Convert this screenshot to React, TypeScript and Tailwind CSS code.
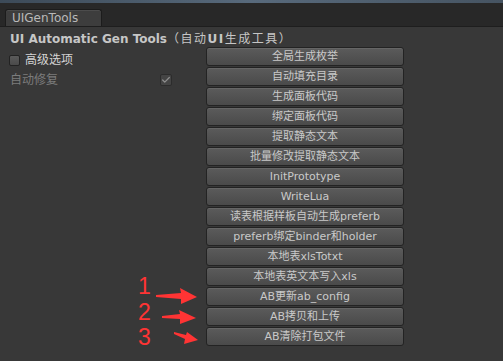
import { Check } from "lucide-react";

const buttons = [
  "全局生成枚举",
  "自动填充目录",
  "生成面板代码",
  "绑定面板代码",
  "提取静态文本",
  "批量修改提取静态文本",
  "InitPrototype",
  "WriteLua",
  "读表根据样板自动生成preferb",
  "preferb绑定binder和holder",
  "本地表xlsTotxt",
  "本地表英文本写入xls",
  "AB更新ab_config",
  "AB拷贝和上传",
  "AB清除打包文件",
];

const font = { fontFamily: '"DejaVu Sans", "Noto Sans CJK SC", sans-serif' };

function EditorButton({ label }: { label: string }) {
  return (
    <button
      className="h-[19px] w-[198px] rounded-[3px] border border-[#232323] bg-gradient-to-b from-[#5b5b5b] to-[#4a4a4a] text-[11px] leading-[17px] text-[#c9c9c9] shadow-[inset_0_1px_0_#666]"
    >
      {label}
    </button>
  );
}

// red markers drawn on top of the screenshot
function Annotations() {
  return (
    <div className="pointer-events-none absolute inset-0">
      <span className="absolute left-[138px] top-[273px] text-[23px] leading-[26px] text-[#ff3434]" style={{ fontFamily: '"Liberation Sans", sans-serif' }}>1</span>
      <span className="absolute left-[138px] top-[299px] text-[23px] leading-[26px] text-[#ff3434]" style={{ fontFamily: '"Liberation Sans", sans-serif' }}>2</span>
      <span className="absolute left-[138px] top-[324px] text-[23px] leading-[26px] text-[#ff3434]" style={{ fontFamily: '"Liberation Sans", sans-serif' }}>3</span>
      <svg className="absolute left-0 top-0" width="503" height="361">
        <polygon points="156,295 181,293 180,288 197,297 181,304 181,299 156,297" fill="#ff3434" />
        <polygon points="162,316 180,314 179,310 196,318 180,324 180,319 162,318" fill="#ff3434" />
        <polygon points="174,332 186,335 187,332 198,340 184,344 185,339 174,334" fill="#ff3434" />
      </svg>
    </div>
  );
}

export default function App() {
  return (
    <div className="relative flex h-[361px] w-[503px] flex-col overflow-hidden bg-[#383838]" style={font}>
      <div className="h-[3px] bg-gradient-to-r from-[#3c4a58] via-[#586a7c] to-[#465462]" />
      <div className="flex h-[24px] items-end border-b border-[#1e1e1e] bg-[#282828] pl-[5px]">
        <div className="flex h-[17px] w-[97px] items-center rounded-t-[3px] border border-b-0 border-[#1c1c1c] bg-[#3d3d3d] pl-[6px] text-[12px] text-[#b9b9b9] shadow-[inset_0_1px_0_#4c4c4c]">
          UIGenTools
        </div>
      </div>

      <div className="flex flex-col pl-[10px] pt-[5px]">
        <div className="h-[15px] text-[12px] leading-[15px] text-[#c6c6c6]">
          <span className="font-bold">UI Automatic Gen Tools</span>
          <span className="tracking-[1.5px]">（自动<span className="font-bold">UI</span>生成工具）</span>
        </div>
        <div className="flex">
          <div className="flex w-[196px] flex-col pt-[7px]">
            <div className="flex h-[12px] items-center gap-[5px]">
              <div className="ml-[-1px] h-[11px] w-[11px] rounded-[2px] border border-[#222] bg-gradient-to-b from-[#5a5a5a] to-[#4a4a4a]" />
              <span className="text-[12px] text-[#d4d4d4]">高级选项</span>
            </div>
            <div className="mt-[7px] flex h-[13px] items-center">
              <span className="w-[150px] text-[12px] text-[#7c7c7c]">自动修复</span>
              <div className="flex h-[12px] w-[12px] items-center justify-center rounded-[2px] border border-[#2c2c2c] bg-[#444]">
                <Check size={10} strokeWidth={3} className="text-[#8e8e8e]" />
              </div>
            </div>
          </div>
          <div className="flex flex-col gap-[1px]">
            {buttons.map((b) => (
              <EditorButton key={b} label={b} />
            ))}
          </div>
        </div>
      </div>
      <Annotations />
    </div>
  );
}
